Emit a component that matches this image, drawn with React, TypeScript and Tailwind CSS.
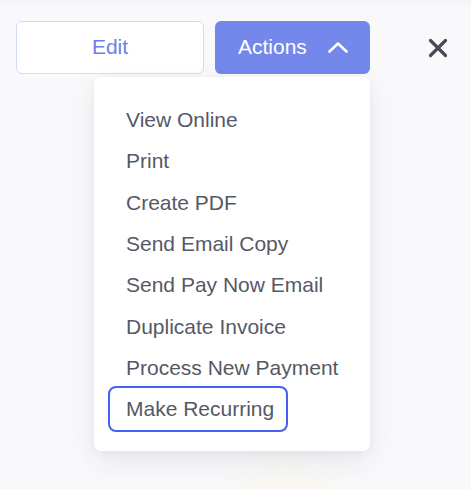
import React from "react";

const items = [
  "View Online",
  "Print",
  "Create PDF",
  "Send Email Copy",
  "Send Pay Now Email",
  "Duplicate Invoice",
  "Process New Payment",
  "Make Recurring",
];

export default function App() {
  return (
    <div
      className="relative w-[471px] h-[489px] overflow-hidden bg-[#f9f9fb]"
      style={{ fontFamily: '"Liberation Sans", Arial, sans-serif' }}
    >
      <div className="absolute left-0 top-0 w-full h-[8px] bg-gradient-to-b from-[#f4f4f6] to-[#f9f9fb]" />
      <div className="absolute left-[235px] top-[478px] w-[100px] h-[50px] rounded-full bg-[#fcf7ec] blur-[16px]" />
      <div className="relative flex items-start pt-[21px] pl-[16px]">
        <button className="w-[188px] h-[53px] rounded-[6px] border border-[#d3daf9] bg-white text-[21px] text-[#6d80e6] flex items-center justify-center pb-[1px]">
          Edit
        </button>
        <div className="relative ml-[11px]">
          <button className="w-[155px] h-[53px] rounded-[6px] bg-[#7388ea] text-white text-[21px] flex items-center pl-[23px] pb-[1px]">
            <span>Actions</span>
            <svg
              className="ml-[21px] mt-[1px]"
              width="20"
              height="11"
              viewBox="0 0 20 11"
              fill="none"
              stroke="white"
              strokeWidth="2.6"
              strokeLinecap="round"
              strokeLinejoin="round"
            >
              <path d="M1.5 9.5 L10 1.5 L18.5 9.5" />
            </svg>
          </button>
          <div className="absolute right-0 top-[56px] w-[276px] rounded-[7px] bg-white shadow-[0_10px_28px_rgba(40,40,80,0.09),0_2px_6px_rgba(40,40,80,0.04)] pt-[22px] pb-[21px] px-[16px] flex flex-col items-start">
            {items.map((t, i) => (
              <div
                key={t}
                className={
                  "h-[41.33px] flex items-center pl-[16px] text-[21px] text-[#555965] whitespace-nowrap rounded-[6px] " +
                  (i === items.length - 1
                    ? "pr-[12px] outline-[2.5px] outline-[#4361f1]"
                    : "pr-[16px]")
                }
              >
                {t}
              </div>
            ))}
          </div>
        </div>
        <button className="ml-[57px] mt-[16px] w-[22px] h-[22px] flex items-center justify-center">
          <svg width="20" height="20" viewBox="0 0 20 20" fill="none" stroke="#474b56" strokeWidth="3.2" strokeLinecap="round">
            <path d="M2.5 2.5 L17.5 17.5 M17.5 2.5 L2.5 17.5" />
          </svg>
        </button>
      </div>
    </div>
  );
}
